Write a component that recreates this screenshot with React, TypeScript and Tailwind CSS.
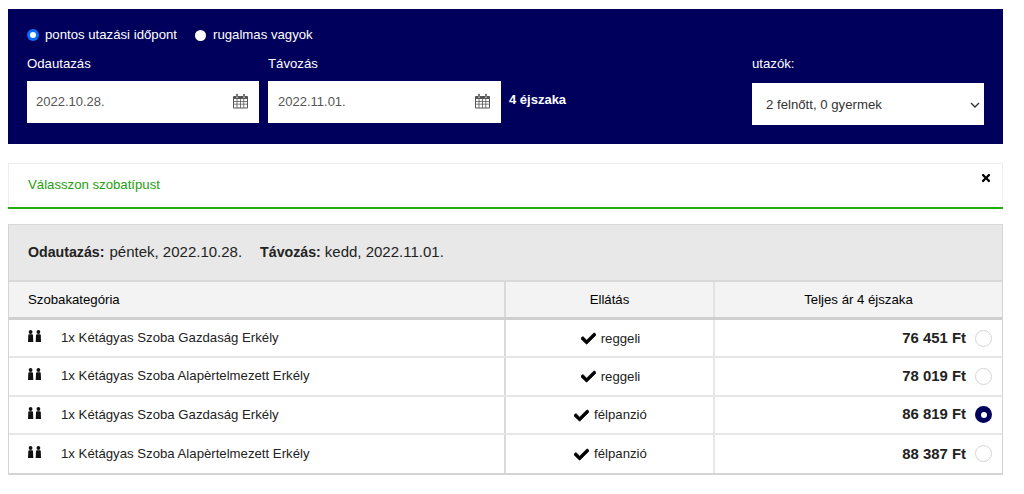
import React from "react";
import { FaCheck, FaTimes } from "react-icons/fa";

interface RoomRow {
    name: string;
    board: string;
    price: string;
    selected?: boolean;
}

const rows: RoomRow[] = [
    { name: "1x Kétágyas Szoba Gazdaság Erkély", board: "reggeli", price: "76 451 Ft" },
    { name: "1x Kétágyas Szoba Alapèrtelmezett Erkély", board: "reggeli", price: "78 019 Ft" },
    { name: "1x Kétágyas Szoba Gazdaság Erkély", board: "félpanzió", price: "86 819 Ft", selected: true },
    { name: "1x Kétágyas Szoba Alapèrtelmezett Erkély", board: "félpanzió", price: "88 387 Ft" },
];

const CalendarIcon = () => (
    <svg width="15" height="16" viewBox="0 0 15 16" className="mb-[2px] text-[#555]">
        <path fill="currentColor" d="M1 3h2v1.5h2V3h5v1.5h2V3h2a1 1 0 0 1 1 1v10.5a1 1 0 0 1-1 1H1a1 1 0 0 1-1-1V4a1 1 0 0 1 1-1z" />
        <rect x="3.2" y="0.8" width="1.6" height="3.2" rx="0.6" fill="currentColor" />
        <rect x="10.2" y="0.8" width="1.6" height="3.2" rx="0.6" fill="currentColor" />
        <path fill="#fff" d="M1 6h2.6v2H1zM4.4 6h2.6v2H4.4zM7.8 6h2.6v2H7.8zM11.2 6H14v2h-2.8zM1 8.8h2.6v2H1zM4.4 8.8h2.6v2H4.4zM7.8 8.8h2.6v2H7.8zM11.2 8.8H14v2h-2.8zM1 11.6h2.6v2.9H1zM4.4 11.6h2.6v2.9H4.4zM7.8 11.6h2.6v2.9H7.8zM11.2 11.6H14v2.9h-2.8z" />
    </svg>
);

const PersonsIcon = () => (
    <svg width="13" height="13" viewBox="0 0 13 13" fill="#111" className="mb-[3px]">
        <circle cx="2.6" cy="2" r="1.9" />
        <path d="M1.2 4.2h2.8a1 1 0 0 1 1 1L5.3 12H0l0.3-6.8a1 1 0 0 1 .9-1z" />
        <circle cx="10.4" cy="2" r="1.9" />
        <path d="M9 4.2h2.8a1 1 0 0 1 1 1L13 12H7.7L8 5.2a1 1 0 0 1 1-1z" />
    </svg>
);

const DateField = ({ value, className }: { value: string; className: string }) => (
    <div className={`flex h-[42px] items-center justify-between bg-white pr-[11px] text-[13px] text-[#555] ${className}`}>
        <span>{value}</span>
        <CalendarIcon />
    </div>
);

export default function App() {
    return (
        <div className="min-h-[494px] bg-white pl-2 pr-[21px] pt-[9px] font-['Liberation_Sans',Arial,sans-serif] text-[13.2px] text-[#222]">
            {/* Search panel */}
            <div className="h-[135px] bg-[#00005c] pl-[19px] pr-[19px] pt-[17px] text-white">
                <div className="flex h-[18px] items-center">
                    <span className="flex h-[12px] w-[12px] items-center justify-center rounded-full bg-[#0b6cf5]">
                        <span className="h-[6px] w-[6px] rounded-full bg-white" />
                    </span>
                    <span className="ml-[6px]">pontos utazási időpont</span>
                    <span className="ml-[18px] h-[11px] w-[11px] rounded-full bg-white" />
                    <span className="ml-[7px]">rugalmas vagyok</span>
                </div>
                <div className="mt-2 flex">
                    <div className="w-[241px]">
                        <div className="flex h-[24px] items-center">Odautazás</div>
                        <div className="mt-[5px]">
                            <DateField value="2022.10.28." className="w-[232px] pl-[9px]" />
                        </div>
                    </div>
                    <div className="w-[241px]">
                        <div className="flex h-[24px] items-center">Távozás</div>
                        <div className="mt-[5px]">
                            <DateField value="2022.11.01." className="w-[233px] pl-[10px]" />
                        </div>
                    </div>
                    <div className="mt-[29px] flex h-[38px] w-[243px] items-center text-[13px] font-bold">4 éjszaka</div>
                    <div className="w-[232px]">
                        <div className="flex h-[24px] items-center">utazók:</div>
                        <div className="mt-[7px] flex h-[42px] items-center justify-between bg-white pl-[14px] pr-[4px] pt-[1px] text-[#333]">
                            <span>2 felnőtt, 0 gyermek</span>
                            <svg width="10" height="6" viewBox="0 0 10 6" fill="none" stroke="#333" strokeWidth="1.4">
                                <path d="M1 1l4 4 4-4" />
                            </svg>
                        </div>
                    </div>
                </div>
            </div>

            {/* Message */}
            <div className="relative mt-[19px] flex h-[44px] items-center border-x border-t border-[#eee] pb-[2px] pl-[19px] text-[#22a00e]">
                Válasszon szobatípust
                <FaTimes className="absolute right-[10px] top-[8px] text-[12px] text-black" />
            </div>
            <div className="h-[2px] bg-[#1fae0a]" />

            {/* Results */}
            <div className="mt-[15px] border-x border-b-2 border-[#d4d4d4]">
                <div className="flex h-[58px] items-center border-t border-b-2 border-[#d9d9d9] bg-[#e8e8e8] pl-[19px] text-[15px]">
                    <b className="text-[14.2px]">Odautazás:</b>
                    <span className="ml-[5px]">péntek, 2022.10.28.</span>
                    <b className="ml-[18px] text-[14.2px]">Távozás:</b>
                    <span className="ml-1">kedd, 2022.11.01.</span>
                </div>
                <div className="grid h-[38px] grid-cols-[497px_209px_1fr] border-b-[3px] border-[#cfcfcf] bg-[#f3f3f3] text-black">
                    <div className="flex items-center border-r-2 border-[#d9d9d9] pl-[19px]">Szobakategória</div>
                    <div className="flex items-center justify-center border-r-2 border-[#e2e2e2]">Ellátás</div>
                    <div className="flex items-center justify-center">Teljes ár 4 éjszaka</div>
                </div>
                {rows.map((row, i) => (
                    <div
                        key={i}
                        className={`grid h-[38.25px] grid-cols-[497px_209px_1fr] ${
                            i < rows.length - 1 ? "border-b-2 border-[#e6e6e6]" : ""
                        }`}
                    >
                        <div className="flex items-center border-r-2 border-[#d9d9d9] pl-[19px]">
                            <PersonsIcon />
                            <span className="ml-5">{row.name}</span>
                        </div>
                        <div className="flex items-center justify-center border-r-2 border-[#e6e6e6] pl-[2px] pt-[1px]">
                            <FaCheck className="mr-[5px] stroke-[25] text-[15px] text-black" />
                            {row.board}
                        </div>
                        <div className="flex items-center justify-end pr-[10px]">
                            <span className="text-[14.9px] font-bold">{row.price}</span>
                            {row.selected ? (
                                <span className="ml-[9px] flex h-[17px] w-[17px] items-center justify-center rounded-full bg-[#00005c]">
                                    <span className="h-[6px] w-[6px] rounded-full bg-white" />
                                </span>
                            ) : (
                                <span className="ml-[9px] h-[17px] w-[17px] rounded-full border border-[#d5d5d5] bg-white" />
                            )}
                        </div>
                    </div>
                ))}
            </div>
        </div>
    );
}
